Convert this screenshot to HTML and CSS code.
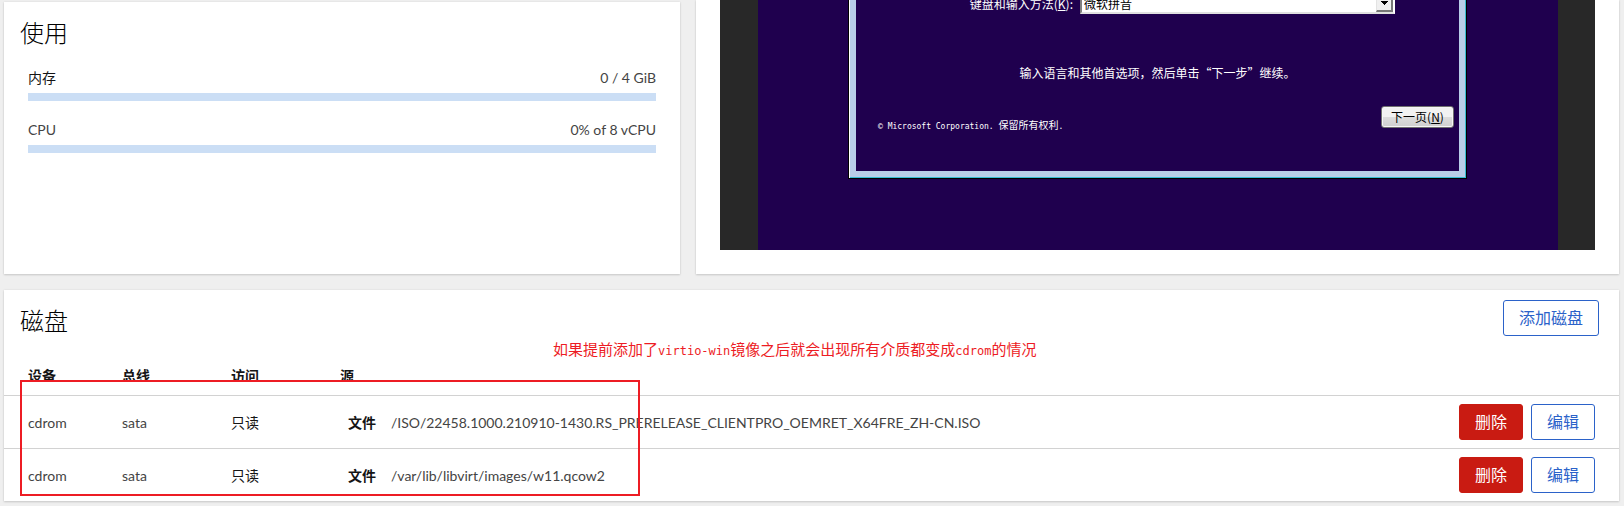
FILE: index.html
```html
<!DOCTYPE html>
<html lang="zh-CN">
<head>
<meta charset="utf-8">
<title>虚拟机</title>
<link rel="stylesheet" href="styles.css">
</head>
<body>
<main class="page">
  <section class="card usage">
    <h2 class="card-title">使用</h2>
    <div class="gauges">
      <div class="gauge">
        <div class="gauge-head"><span id="mem">内存</span><span class="soft">0 / 4 GiB</span></div>
        <div class="gauge-bar" role="progressbar" aria-labelledby="mem" aria-valuenow="0"></div>
      </div>
      <div class="gauge">
        <div class="gauge-head"><span id="cpu" class="soft">CPU</span><span class="soft">0% of 8 vCPU</span></div>
        <div class="gauge-bar" role="progressbar" aria-labelledby="cpu" aria-valuenow="0"></div>
      </div>
    </div>
  </section>

  <section class="card console">
    <div class="viewer">
      <div class="desktop">
        <div class="setup">
          <div class="setup-body">
            <div class="setup-field">
              <label for="ime">键盘和输入方法(<u>K</u>):</label>
              <span class="combo">
                <select id="ime"><option>微软拼音</option></select>
                <span class="combo-arrow"><svg width="7" height="4" viewBox="0 0 7 4"><path d="M0 0h7v1h-1v1h-1v1h-1v1h-1v-1h-1v-1h-1v-1h-1z"/></svg></span>
              </span>
            </div>
            <p class="setup-hint">输入语言和其他首选项，然后单击“下一步”继续。</p>
            <div class="setup-foot">
              <small class="copyright"><span class="latin">© Microsoft Corporation. </span>保留所有权利<span class="latin">.</span></small>
              <button class="next" type="button">下一页(<u>N</u>)</button>
            </div>
          </div>
        </div>
      </div>
    </div>
  </section>

  <section class="card disks">
    <header class="disks-head">
      <h2 class="card-title">磁盘</h2>
      <button class="btn" type="button">添加磁盘</button>
    </header>
    <table class="disk-table">
      <thead>
        <tr><th class="c-device">设备</th><th class="c-bus">总线</th><th class="c-access">访问</th><th>源</th><th></th></tr>
      </thead>
      <tbody>
        <tr>
          <td class="soft">cdrom</td><td class="soft">sata</td><td>只读</td>
          <td><div class="source"><b>文件</b><span class="soft">/ISO/22458.1000.210910-1430.RS_PRERELEASE_CLIENTPRO_OEMRET_X64FRE_ZH-CN.ISO</span></div></td>
          <td><div class="actions"><button class="btn danger" type="button">删除</button><button class="btn" type="button">编辑</button></div></td>
        </tr>
        <tr>
          <td class="soft">cdrom</td><td class="soft">sata</td><td>只读</td>
          <td><div class="source"><b>文件</b><span class="soft">/var/lib/libvirt/images/w11.qcow2</span></div></td>
          <td><div class="actions"><button class="btn danger" type="button">删除</button><button class="btn" type="button">编辑</button></div></td>
        </tr>
      </tbody>
    </table>
    <div class="mark-box"></div>
    <p class="mark-note">如果提前添加了<span class="latin">virtio-win</span>镜像之后就会出现所有介质都变成<span class="latin">cdrom</span>的情况</p>
  </section>
</main>
</body>
</html>
```
FILE: styles.css
```css
* { box-sizing: border-box; }

body {
  margin: 0;
  background: #efefef;
  color: #151515;
  font: 400 14px/21px Lato, "Noto Sans CJK SC", sans-serif;
}

h2, p { margin: 0; }
button, select { font: inherit; }
.soft { color: #444; }

.page {
  display: grid;
  grid-template-columns: minmax(0, 676fr) minmax(0, 923fr);
  gap: 16px;
  padding: 0 5px 5px 4px;
}

.card {
  background: #fff;
  box-shadow: 0 1px 2px rgba(3, 3, 3, 0.15), 0 0 2px rgba(3, 3, 3, 0.08);
}

.card-title {
  color: #000;
  font-size: 24px;
  font-weight: 300;
  line-height: 36px;
}

/* Usage */
.usage { margin-top: 2px; padding: 13px 24px 24px 16px; }
.gauges { display: grid; gap: 18px; padding: 16px 0 0 8px; }
.gauge { display: grid; gap: 5px; }
.gauge-head { display: flex; justify-content: space-between; }
.gauge-bar { height: 8px; background: #cbdef5; }

/* Console */
.console { padding: 0 24px 24px; }
.viewer { display: flex; justify-content: center; background: #282828; overflow: hidden; }
.desktop {
  display: flex;
  justify-content: center;
  flex: 0 1 800px;
  padding-bottom: 71px;
  background: #1f004e;
}
.setup {
  flex: 0 1 619px;
  padding: 0 1px 1px;
  border: solid #000;
  border-width: 0 1px 1px;
  background: linear-gradient(90deg, #fff 1px, #38bdd3 1px);
  font: 400 12px/20px "Noto Sans CJK SC", sans-serif;
}
.setup-body {
  padding-bottom: 36px;
  border: 6px solid #b9cee8;
  border-top: 0;
  background: #1f004e;
  color: #fff;
}

.setup-field {
  display: flex;
  align-items: center;
  justify-content: flex-end;
  gap: 7px;
  margin-top: -7px;
  padding-right: 64px;
}
.combo { position: relative; flex: 0 1 315px; display: flex; }
.combo select {
  appearance: none;
  width: 100%;
  height: 21px;
  padding: 0 20px 0 2px;
  border: 2px solid #fff;
  border-left-color: #808080;
  border-bottom-color: #e0e0e0;
  border-radius: 0;
  background: #fff;
  color: #000;
  line-height: 16px;
}
.combo-arrow {
  position: absolute;
  top: 2px;
  right: 2px;
  bottom: 2px;
  width: 17px;
  display: grid;
  place-items: center;
  border: 1px solid #e3e3e3;
  border-right: 2px solid #777;
  border-bottom: 2px solid #777;
  background: #f0f0f0;
  pointer-events: none;
}
.setup-hint { margin-top: 49px; text-align: center; }
.setup-foot {
  display: flex;
  justify-content: space-between;
  align-items: flex-start;
  margin-top: 23px;
  padding: 0 5px 0 22px;
}
.copyright { padding-top: 11px; font-size: 10px; line-height: 16px; white-space: pre; }
.copyright .latin { font-family: "DejaVu Sans Mono", monospace; font-size: 8px; }
.next {
  width: 73px;
  height: 22px;
  padding: 0;
  border: 1px solid #707070;
  border-radius: 3px;
  background: linear-gradient(#f2f2f2 0 50%, #dddddd 50%, #cfcfcf);
  box-shadow: inset 0 0 0 1px #f6f6f6;
  color: #000;
  line-height: 18px;
}

/* Disks */
.disks { grid-column: 1 / -1; position: relative; }
.disks-head {
  display: flex;
  justify-content: space-between;
  align-items: flex-start;
  padding: 10px 20px 0 16px;
}
.disks-head .card-title { padding: 3px 0; }

.btn {
  height: 36px;
  padding: 0 15px;
  border: 1px solid #2b62c9;
  border-radius: 3px;
  background: #fff;
  color: #2b62c9;
  font-size: 16px;
  font-weight: 400;
  line-height: 24px;
}
.danger { border-color: #c91b12; background: #c91b12; color: #fff; }

.disk-table { width: 100%; border-collapse: separate; border-spacing: 0; }
.disk-table th { padding: 23px 0 9px; text-align: left; font-weight: 700; }
.disk-table td { padding: 8px 0; border-top: 1px solid #d2d2d2; }
.disk-table th:first-child, .disk-table td:first-child { padding-left: 24px; }
.disk-table .c-device { width: 118px; }
.disk-table .c-bus, .disk-table .c-access { width: 109px; }
.source { display: flex; gap: 15px; padding-left: 8px; }
.source b { font-weight: 700; }
.actions { display: flex; justify-content: flex-end; gap: 8px; padding-right: 24px; }

/* Annotations drawn over the disk card */
.mark-box {
  position: absolute;
  top: 90px;
  left: 16px;
  width: 620px;
  height: 116px;
  border: 2px solid #ed1c24;
  background: linear-gradient(#fff, #fff) top / 100% 8px no-repeat;
  background-origin: padding-box;
  pointer-events: none;
}
.mark-note {
  position: absolute;
  top: 48px;
  left: 549px;
  color: #ed1c24;
  font: 400 15px/21px "Noto Sans CJK SC", sans-serif;
  white-space: nowrap;
}
.mark-note .latin { font-family: "DejaVu Sans Mono", monospace; font-size: 12px; }
```
